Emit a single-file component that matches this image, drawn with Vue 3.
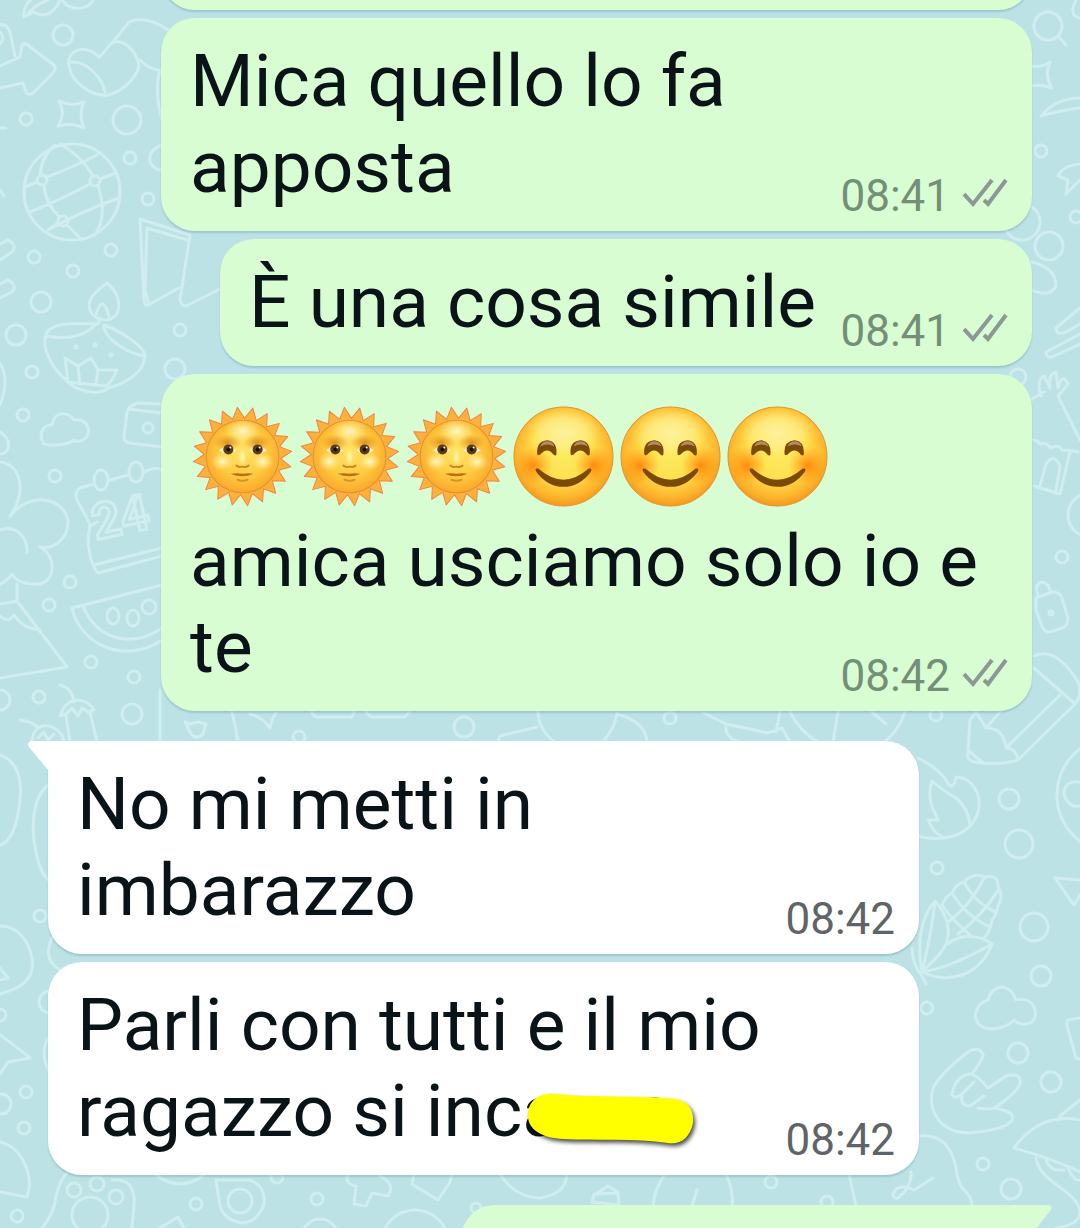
<template>
  <main class="chat">
    <!-- sfondo con i disegnini -->
    <svg class="wallpaper" viewBox="0 0 1080 1228" preserveAspectRatio="xMidYMid slice" aria-hidden="true">
      <circle v-for="(c, i) in circles" :key="'c' + i" :cx="c[0]" :cy="c[1]" :r="c[2]" />
      <path v-for="(d, i) in doodles" :key="'d' + i" :d="d" />
      <ellipse cx="101" cy="480" rx="7" ry="10" />
      <ellipse cx="136" cy="472" rx="7" ry="10" />
      <ellipse cx="113" cy="616" rx="6" ry="8" />
      <ellipse cx="133" cy="618" rx="6" ry="8" />
      <ellipse cx="149" cy="607" rx="7" ry="7" />
      <text x="96" y="540" transform="rotate(-12 96 540)">24</text>
    </svg>

    <!-- definizioni delle emoji -->
    <svg class="defs" width="0" height="0" aria-hidden="true">
      <defs>
        <radialGradient id="faceFill" cx="50%" cy="44%" r="58%">
          <stop offset="0" stop-color="#fdec62" />
          <stop offset="0.5" stop-color="#fde04f" />
          <stop offset="0.82" stop-color="#fdb52c" />
          <stop offset="1" stop-color="#f3901d" />
        </radialGradient>
        <radialGradient id="faceShine">
          <stop offset="0" stop-color="#fff4b0" stop-opacity="0.8" />
          <stop offset="0.6" stop-color="#fff2a0" stop-opacity="0.5" />
          <stop offset="1" stop-color="#fff07a" stop-opacity="0" />
        </radialGradient>
        <radialGradient id="blush">
          <stop offset="0" stop-color="#ff7a00" stop-opacity="0.8" />
          <stop offset="1" stop-color="#ff8a00" stop-opacity="0" />
        </radialGradient>
        <radialGradient id="sunFill" cx="50%" cy="45%" r="55%">
          <stop offset="0" stop-color="#ffe56b" />
          <stop offset="0.6" stop-color="#fdcb3f" />
          <stop offset="1" stop-color="#fba72c" />
        </radialGradient>
        <radialGradient id="glow">
          <stop offset="0" stop-color="#fffbd0" stop-opacity="0.9" />
          <stop offset="1" stop-color="#fff3a0" stop-opacity="0" />
        </radialGradient>
        <radialGradient id="shade">
          <stop offset="0" stop-color="#cf7412" stop-opacity="0.7" />
          <stop offset="1" stop-color="#e08a1c" stop-opacity="0" />
        </radialGradient>
      </defs>
      <symbol id="emoji-smile" viewBox="0 0 100 100">
        <circle cx="50" cy="50" r="49" fill="url(#faceFill)" stroke="#e3942b" stroke-width="1" />
        <ellipse cx="50" cy="26" rx="38" ry="24" fill="url(#faceShine)" />
        <circle cx="20" cy="59" r="19" fill="url(#blush)" />
        <circle cx="80" cy="59" r="19" fill="url(#blush)" />
        <path d="M24 47 Q23 35 34 34 Q44 35 43 48 Q42 50 40 48 Q34 40 27 48 Q24 50 24 47Z M57 47 Q56 35 67 34 Q77 35 76 48 Q75 50 73 48 Q67 40 60 48 Q57 50 57 47Z" fill="#7a4a06" />
        <path d="M27 40 Q29 35 34 35 Q39 35 41 40 Q34 36 27 40Z M60 40 Q62 35 67 35 Q72 35 74 40 Q67 36 60 40Z" fill="#b48c68" />
        <path d="M23 65 Q21 61 25 62 Q50 84 75 62 Q79 61 77 65 Q66 80 50 80 Q34 80 23 65Z" fill="#7a4a06" />
      </symbol>
      <symbol id="emoji-sun" viewBox="0 0 100 100">
        <polygon :points="sunRays" fill="#fdb03a" stroke="#ef8348" stroke-width="1" stroke-linejoin="round" />
        <circle cx="50" cy="50" r="36" fill="url(#sunFill)" stroke="#d99535" stroke-width="1" />
        <ellipse cx="50" cy="25" rx="18" ry="12" fill="url(#glow)" />
        <ellipse cx="35" cy="36" rx="14" ry="8" fill="url(#shade)" />
        <ellipse cx="65" cy="36" rx="14" ry="8" fill="url(#shade)" />
        <ellipse cx="30" cy="55" rx="11" ry="9" fill="url(#glow)" />
        <ellipse cx="70" cy="55" rx="11" ry="9" fill="url(#glow)" />
        <path d="M27 44 Q35 36 44 44 Q35 50 27 44Z M57 44 Q65 36 74 44 Q65 50 57 44Z" fill="#fff3d6" />
        <circle cx="36" cy="43" r="5" fill="#5a3a1c" />
        <circle cx="65" cy="43" r="5" fill="#5a3a1c" />
        <circle cx="36" cy="43" r="2" fill="#1c110a" />
        <circle cx="65" cy="43" r="2" fill="#1c110a" />
        <circle cx="38" cy="41" r="1" fill="#fff" />
        <circle cx="67" cy="41" r="1" fill="#fff" />
        <ellipse cx="50" cy="51" rx="4" ry="9" fill="url(#glow)" />
        <path d="M44 59 Q47 61 50 60 Q53 61 56 59" fill="none" stroke="#cf8520" stroke-width="2" stroke-linecap="round" />
        <path d="M38 67 Q45 66 50 67 Q55 66 61 67 Q50 72 38 67Z" fill="#c06a1a" />
        <path d="M45 73 Q50 75 55 73" fill="none" stroke="#d99226" stroke-width="2" stroke-linecap="round" />
      </symbol>
    </svg>

    <div class="bubble out previous"></div>

    <article v-for="m in messages"
             :key="m.id"
             class="bubble"
             :class="[m.mine ? 'out' : 'in', { first: m.first }]">
      <svg v-if="m.first" class="tail" viewBox="0 0 21 30" aria-hidden="true">
        <path d="M21 0 H4 Q-2 1 1 6 L21 30 Z" />
      </svg>
      <div v-if="m.emojis" class="emojis">
        <svg v-for="(e, i) in m.emojis" :key="i" class="emoji" role="img" :aria-label="e">
          <use :href="'#emoji-' + e" />
        </svg>
      </div>
      <p class="text">{{ m.text }}<span v-if="m.hidden" class="hidden-word">{{ m.hidden }}<svg class="marker" viewBox="0 0 180 64" aria-hidden="true">
        <path d="M2 20 C4 6 16 0 30 2 C70 6 110 3 150 7 C164 10 168 20 167 31 C164 46 154 53 142 51 C110 46 70 49 38 47 C14 46 0 36 2 20Z" />
      </svg></span><span class="spacer"></span></p>
      <div class="meta">
        <time>{{ m.time }}</time>
        <svg v-if="m.mine" class="checks" viewBox="0 0 45 36" role="img" aria-label="consegnato">
          <path d="M1 16 L10 26 L29 2 M21 22 L25 26 L43 2" />
        </svg>
      </div>
    </article>

    <div class="bubble out next">
      <svg class="tail" viewBox="0 0 21 30" aria-hidden="true">
        <path d="M0 0 H17 Q23 1 19 6 L0 30 Z" />
      </svg>
    </div>
  </main>
</template>

<script setup>
import { computed } from 'vue';

const messages = [
  { id: 1, mine: true, text: 'Mica quello lo fa apposta', time: '08:41' },
  { id: 2, mine: true, text: 'È una cosa simile', time: '08:41' },
  {
    id: 3,
    mine: true,
    emojis: ['sun', 'sun', 'sun', 'smile', 'smile', 'smile'],
    text: 'amica usciamo solo io e te',
    time: '08:42'
  },
  { id: 4, mine: false, first: true, text: 'No mi metti in imbarazzo', time: '08:42' },
  { id: 5, mine: false, text: 'Parli con tutti e il mio ragazzo si inc', hidden: 'azza', time: '08:42' }
];

// punte del sole, alternando raggio esterno e interno
const sunRays = computed(() => {
  const points = [];
  for (let i = 0; i < 40; i++) {
    const r = i % 2 === 0 ? 49 : 38;
    const a = ((i * 9 - 6) * Math.PI) / 180;
    points.push((50 + r * Math.sin(a)).toFixed(1) + ',' + (50 - r * Math.cos(a)).toFixed(1));
  }
  return points.join(' ');
});

// cerchietti dello sfondo: x, y, raggio
const circles = [
  [63, 35, 10], [26, 119, 6], [127, 120, 14], [130, 158, 6], [148, 199, 6], [34, 257, 6],
  [111, 250, 6], [73, 271, 6], [41, 302, 10], [16, 335, 10], [32, 372, 6], [180, 330, 6],
  [175, 369, 10], [72, 192, 48], [42, 180, 5], [95, 181, 5], [63, 221, 5], [23, 415, 6],
  [148, 428, 5], [55, 476, 6], [70, 582, 6], [49, 605, 6], [91, 662, 6], [134, 677, 6],
  [39, 697, 6], [132, 714, 10], [0, 700, 10], [40, 916, 6], [0, 1015, 6], [50, 1002, 11],
  [26, 1092, 6], [1, 1104, 10], [24, 1128, 6], [17, 1216, 6], [74, 1190, 7], [97, 1184, 7],
  [116, 1197, 7], [90, 1215, 18], [240, 1201, 12], [196, 1204, 6], [277, 1177, 6],
  [76, 347, 1], [95, 345, 1], [111, 355, 1],
  [1048, 26, 14], [1041, 151, 6], [1049, 246, 14], [1076, 217, 6], [1022, 222, 18],
  [1018, 377, 8], [1062, 557, 6], [936, 715, 6], [1090, 515, 22], [1051, 613, 2],
  [1009, 799, 10], [1019, 844, 14], [937, 868, 6], [1034, 927, 14], [1041, 976, 10],
  [927, 1008, 6], [1018, 1053, 10], [1051, 1082, 10], [983, 1164, 6], [1011, 1189, 10],
  [1115, 795, 58], [464, 727, 10], [670, 718, 6], [299, 737, 6], [317, 1199, 6],
  [771, 1182, 6], [827, 1202, 6], [476, 1208, 5], [320, 1237, 18], [415, 1244, 34]
];

const doodles = [
  // foglia, casa, freccia
  'M24 17 C22 6 32 -2 36 -4 M28 14 C36 2 46 4 60 -8 M24 17 L34 12 C46 20 56 10 60 0 M62 0 C70 12 88 10 93 0',
  'M0 25 C6 24 8 27 10 32 L15 56 M0 32 Q6 38 0 44',
  'M0 66 L20 57 L22 45 Q26 42 30 47 L54 65 Q57 69 52 74 L33 93 Q28 96 26 92 L23 83 L0 88',
  // cuori e stella
  'M99 57 C85 43 66 50 69 66 C72 84 94 97 108 95 C124 91 138 76 139 65 C135 48 123 40 114 42 C108 44 106 52 99 57Z M72 62 C88 62 102 78 105 92',
  'M113 42 L129 22 C142 16 156 22 168 30 M140 60 Q150 70 160 70 M160 70 Q154 90 162 120',
  'M59 101 Q71 107 84 102 Q78 114 84 128 Q72 122 58 126 Q66 114 59 101Z',
  // globo
  'M25 187 L37 182 M47 177 Q76 166 97 155 M30 212 Q60 200 90 184 M100 179 L116 173 M48 230 Q80 212 119 198 M40 175 Q42 155 55 145 M44 186 Q46 205 60 217 M67 225 L80 238 M58 223 L48 230 M60 144 Q82 156 93 176 M98 186 Q108 215 95 235',
  'M162 145 Q148 150 150 162 Q154 170 162 170',
  // opuscolo
  'M140 219 L190 235 L180 300 Q182 308 188 305 L222 288 M140 219 L144 300 Q145 308 150 304 L179 288 M147 228 L145 290 L149 304 M147 228 L187 240',
  // lampada
  'M107 283 C118 292 122 305 116 315 C108 324 94 320 90 310 C86 298 98 290 107 283Z M96 315 Q102 292 109 316',
  'M100 318 L98 324 C84 324 52 320 46 334 C40 350 56 372 66 380 C76 392 100 396 108 388 C125 384 145 372 145 355 C142 344 118 330 104 325 C104 332 110 340 120 346 Q132 354 144 356 M46 336 Q80 342 96 324',
  'M65 358 L78 366 L91 358 L98 370 L117 370 Q112 382 106 386 L68 382 Z M78 366 L80 384 M98 370 L96 384',
  'M0 244 L8 240 Q18 246 12 252 L0 260 M0 284 L8 280 Q18 286 12 292 L0 298 M0 363 Q10 380 0 405 M0 128 L6 128 M0 190 L4 196',
  // nuvola e dado
  'M44 444 C36 432 46 424 52 425 C54 412 66 410 74 420 C84 418 90 426 88 434 C86 442 76 442 74 440 C66 446 48 446 44 444Z',
  'M162 404 L138 403 Q128 406 127 412 L124 437 Q124 442 130 443 L162 447 M128 409 L162 413',
  // calendario
  'M162 470 Q155 466 144 472 M128 475 L110 480 M94 484 L80 488 Q74 492 77 500 L90 524 L88 540 Q90 565 98 573 L162 556 M90 526 L97 522 M94 565 L162 548',
  // albero
  'M0 462 C20 464 28 490 10 516 C30 490 66 498 68 522 C68 540 52 550 40 547 C58 556 56 586 34 584 C20 584 14 578 12 574 C8 580 2 584 0 584 M0 530 C16 524 28 538 27 552 M17 584 L17 601 L67 667 L0 678 M17 601 L0 604 M40 630 C26 628 20 624 14 615 Q8 624 0 616 M0 432 Q10 438 8 448 Q6 454 0 454',
  // anguria
  'M162 585 L72 608 C80 645 125 665 162 640 M83 606 C96 638 130 650 162 628',
  // peperoni
  'M60 685 Q72 688 74 702 M60 716 C66 696 86 696 94 710 L88 712 L82 708 L78 716 L72 708 L66 714Z M66 716 L70 742 M90 712 L97 742 M20 720 Q34 722 38 728 M32 742 C32 724 50 720 62 735 L64 742 M38 738 L44 732 L48 740 L54 734',
  'M160 690 L160 742 M185 722 L190 724 L198 722 L206 724 L203 734 Q196 740 191 734Z M232 712 Q236 728 238 742 M250 714 Q264 718 270 728 Q272 718 276 713 M312 712 Q314 718 320 717 L352 717 L354 712 M366 712 Q370 718 376 717 L405 717 L409 712',
  'M538 710 Q538 730 555 742 M617 713 Q616 726 603 742 M537 727 L500 736 L498 742 M617 714 Q646 722 647 742 M704 713 L726 724 L768 733 L782 728 L790 742 M726 724 Q724 738 740 742 M780 712 L776 732 M790 712 Q800 732 818 742 M838 712 L833 742 M905 712 Q898 732 884 742 M872 712 L886 724',
  // bordo sinistro
  'M0 755 Q24 764 20 800 Q16 840 0 845 M48 785 Q30 800 34 840 Q38 870 48 880 M0 926 C22 926 34 950 32 968 C30 984 14 990 0 994 M0 968 L8 978 L0 980 M52 938 Q42 960 60 970 M0 1035 Q18 1048 30 1058 L8 1062 L0 1074 M50 1036 Q38 1050 50 1074',
  'M0 1142 C24 1148 34 1178 27 1197 L0 1192 M42 1228 Q54 1214 56 1196 Q60 1180 66 1174 M112 1180 Q136 1178 134 1205 L132 1228 M155 1174 Q180 1194 205 1174 M216 1180 L250 1180 Q266 1186 264 1204 Q258 1222 242 1223 Q224 1220 220 1206Z M160 1228 L178 1217 L184 1228',
  // fascia in basso
  'M348 1174 Q344 1184 356 1186 L354 1204 L366 1206 L372 1193 L388 1196 Q396 1184 380 1176 M414 1174 L412 1184 L438 1200 L450 1182 L452 1174 M500 1174 Q514 1197 540 1198 Q566 1194 567 1174 M594 1195 L592 1202 L619 1205 L618 1192 L608 1186Z M596 1194 L618 1193 M665 1174 Q654 1190 653 1206 M697 1190 L692 1206 M726 1174 Q734 1192 732 1206 M849 1174 L856 1206',
  'M911 1172 C912 1182 906 1192 898 1198 C890 1200 892 1188 902 1187 C908 1186 912 1190 914 1190 L933 1178 M920 1136 C942 1134 952 1148 956 1168 Q958 1186 966 1192 Q972 1198 972 1206',
  // bordo destro
  'M1058 36 L1066 45 M1080 18 Q1068 16 1076 0 M1030 66 Q1042 68 1050 62 Q1044 76 1052 88 Q1042 84 1030 86 M1041 116 Q1056 98 1080 98 M1041 116 Q1062 110 1080 108 M1080 164 Q1062 166 1058 176 L1068 180 L1066 194 L1080 180 M1032 262 Q1056 268 1056 286 Q1050 298 1032 290',
  'M1080 308 L1056 328 Q1056 336 1066 332 L1080 324 M1080 334 L1046 352 Q1046 358 1052 357 L1080 344 M1041 396 Q1036 380 1044 376 L1050 388 Q1048 374 1056 372 L1058 388 Q1062 372 1068 384 L1058 396 L1080 440 M1030 400 L1044 392',
  'M1032 440 Q1038 440 1040 444 Q1048 442 1050 448 Q1060 444 1062 450 Q1070 450 1078 452 M1070 452 L1060 494 L1034 486 M1040 486 L1046 464 Q1054 452 1060 466 L1056 490',
  'M1036 598 L1052 592 Q1060 592 1062 598 L1068 618 Q1068 626 1062 628 L1050 632 Q1044 632 1042 626 L1036 610Z M1038 596 Q1034 584 1042 582 Q1050 584 1050 592',
  // matita
  'M1034 656 Q1056 646 1078 682 Q1084 694 1074 705 L1018 760 Q1000 766 974 762 Q966 760 968 752 L970 720 L976 712 M1034 668 L1074 703 M1060 695 L1006 748 M976 712 L986 728 Q1004 728 1006 748 Q1016 748 1018 760 M986 728 L1000 712 M970 752 L982 762',
  // fuoco
  'M918 758 Q942 770 948 784 Q954 790 956 777 C974 778 982 796 978 812 C970 838 940 842 918 836 M932 781 C926 800 934 810 938 820 L928 820 Q934 834 944 838 M932 781 Q942 790 956 798 Q968 808 970 824 M1080 782 Q1064 780 1064 794 Q1068 808 1080 806 M1080 880 L1055 878 L1074 905 L1080 895',
  // pannocchia
  'M935 901 C918 920 918 950 922 972 C934 960 948 948 948 936 Q950 918 935 901Z M922 972 Q932 930 935 901 M922 972 C950 985 980 975 992 944 C976 932 956 936 948 944 M922 972 Q950 968 992 944 M912 948 Q912 964 922 976 L926 984',
  'M942 905 Q946 896 952 893 Q956 884 964 882 Q974 872 985 877 Q998 874 998 886 Q1004 896 998 906 Q996 916 992 920 Q990 932 984 938 M942 905 Q954 922 970 935 M952 893 Q966 916 990 927 M964 882 Q976 904 996 912 M948 922 Q970 906 984 878 M958 934 Q984 914 998 890',
  // nuvola e mano
  'M985 1028 C970 1022 974 1004 988 1000 C992 984 1010 982 1016 1000 C1034 996 1040 1014 1032 1022 C1026 1026 1018 1024 1014 1020 C1006 1028 994 1030 985 1028Z M1080 1018 L1068 1020 Q1066 1022 1067 1026 L1076 1058 L1080 1059',
  'M968 1052 Q978 1046 983 1054 Q984 1058 972 1074 Q980 1078 988 1088 L1006 1076 Q1022 1072 1020 1084 Q1016 1094 994 1108 Q1016 1112 1012 1120 Q1006 1130 968 1133 C936 1132 926 1104 934 1086 Q944 1070 968 1052Z M972 1074 Q956 1074 952 1094 Q954 1100 962 1094 L974 1082 M962 1096 Q960 1106 970 1106 L984 1096 M978 1108 Q990 1110 994 1108',
  'M1080 1120 Q1040 1112 1014 1148 Q1050 1158 1080 1172 M1060 1116 L1080 1100 M1036 1158 C1040 1184 1078 1190 1080 1212 Q1080 1225 1055 1228 M1046 1160 Q1050 1172 1064 1170 M1068 1168 Q1074 1182 1080 1180'
];
</script>

<style>
body {
  margin: 0;
  background: #bde2e6;
}
</style>

<style scoped>
.chat {
  position: relative;
  display: flex;
  flex-direction: column;
  gap: 8px;
  height: 100vh;
  padding: 0 48px;
  box-sizing: border-box;
  overflow: hidden;
  background: #bde2e6;
  font-family: Roboto, "Noto Sans", sans-serif;
  color: #0a1418;
}

.wallpaper {
  position: absolute;
  top: 0;
  left: 0;
  width: 100%;
  height: 100%;
  fill: none;
  stroke: #d0edf0;
  stroke-width: 3;
  stroke-linecap: round;
  stroke-linejoin: round;
}

.wallpaper text {
  font-size: 50px;
  font-weight: 700;
}

.defs {
  position: absolute;
}

.bubble {
  position: relative;
  flex: none;
  max-width: 871px;
  padding: 20px 30px 21px 29px;
  box-sizing: border-box;
  border-radius: 34px;
  box-shadow: 0 2px 2px rgba(30, 90, 100, 0.2);
}

.out {
  align-self: flex-end;
  background: #d8fdd2;
}

.in {
  align-self: flex-start;
  background: #fff;
}

.in.first {
  margin-top: 22px;
  border-top-left-radius: 0;
}

.previous {
  width: 100%;
  height: 80px;
  margin-top: -70px;
}

.next {
  width: 58%;
  height: 120px;
  margin-top: 22px;
  border-top-right-radius: 0;
}

.tail {
  position: absolute;
  top: 0;
  width: 21px;
  height: 30px;
}

.in .tail {
  right: 100%;
  margin-right: -1px;
  fill: #fff;
}

.out .tail {
  left: 100%;
  margin-left: -1px;
  fill: #d8fdd2;
}

.text {
  margin: 0;
  font-size: 73px;
  line-height: 86px;
}

.spacer {
  display: inline-block;
  width: 130px;
}

.out .spacer {
  width: 186px;
}

.emojis {
  display: flex;
  gap: 6px;
  height: 124px;
  padding: 12px 0 0 2px;
  box-sizing: border-box;
}

.emoji {
  width: 101px;
  height: 101px;
}

.hidden-word {
  position: relative;
}

.marker {
  position: absolute;
  top: 24px;
  left: 4px;
  width: 180px;
  height: 64px;
  fill: #ff0;
  filter: drop-shadow(2px 3px 2px rgba(0, 0, 0, 0.7));
}

.meta {
  position: absolute;
  right: 24px;
  bottom: 12px;
  display: flex;
  align-items: center;
  gap: 13px;
  font-size: 44px;
  line-height: 46px;
  color: #5f6468;
}

.out .meta {
  color: #738f77;
}

.checks {
  width: 45px;
  height: 36px;
  fill: none;
  stroke: #8b9896;
  stroke-width: 4;
}
</style>
